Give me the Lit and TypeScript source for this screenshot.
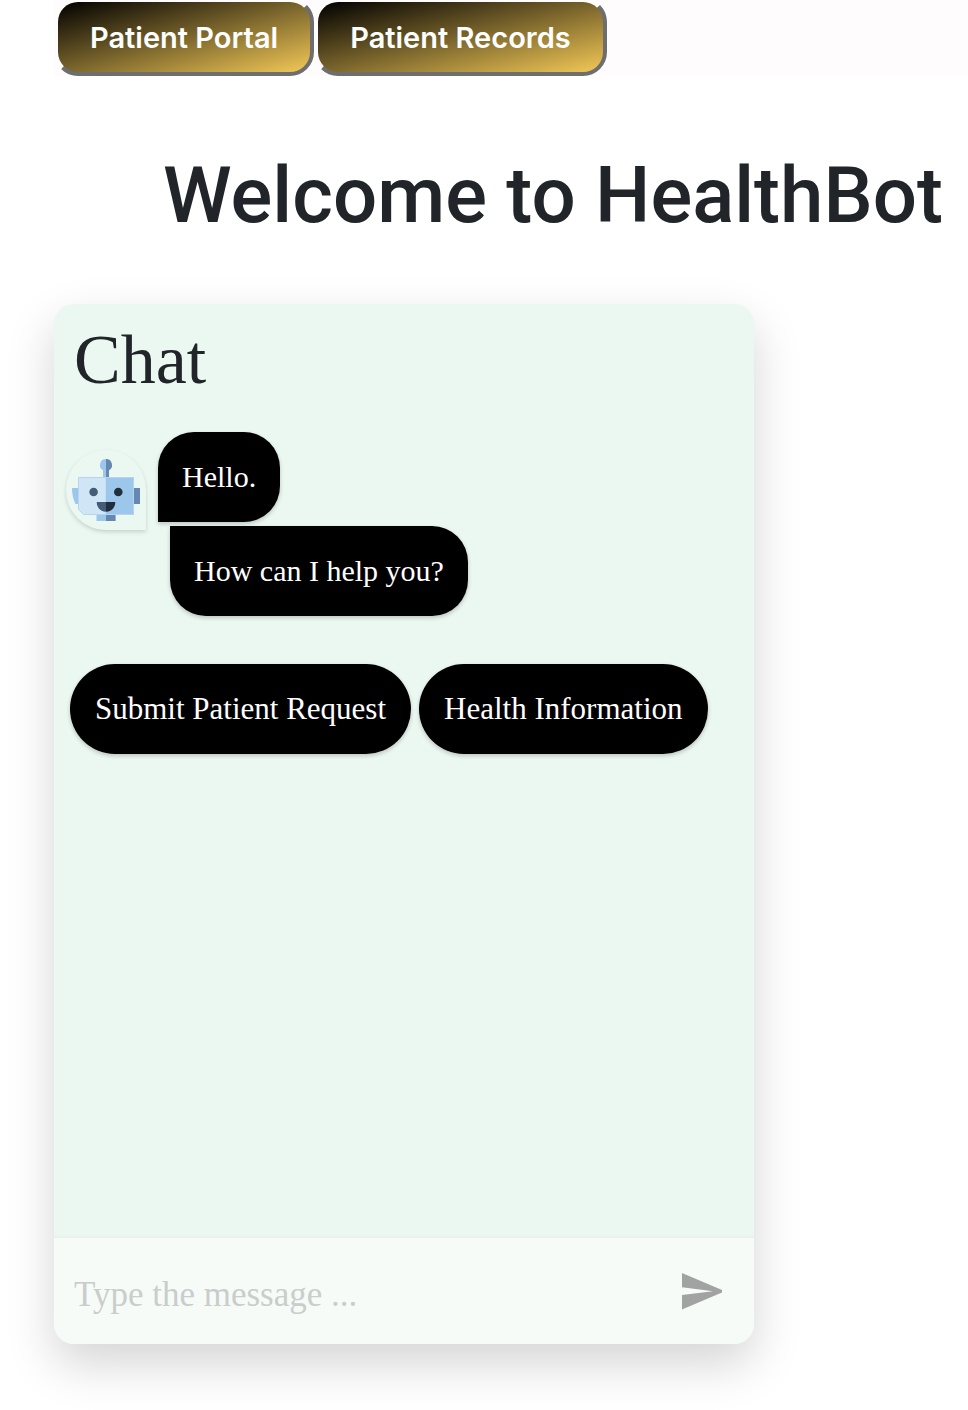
import { LitElement, html, css } from "lit";
import { customElement, property, state } from "lit/decorators.js";

@customElement("bot-avatar")
class BotAvatar extends LitElement {
  static styles = css`
    :host {
      display: block;
      flex: none;
      width: 80px;
      height: 80px;
      border-radius: 40px 40px 0 40px;
      box-shadow: 0 2px 4px rgba(0, 0, 0, 0.15);
    }
    .face {
      display: block;
      width: 100%;
      height: 100%;
    }
  `;

  render() {
    return html`
      <svg class="face" viewBox="0 0 80 80" role="img" aria-label="HealthBot">
        <path fill="#9dc6eb" d="M6 38h7v16H9.500Q6 47 6 38z" />
        <path fill="#6488b0" d="M67 38h7v16h-7z" />
        <path fill="#9dc6eb" d="M30.500 64H40v7h-9.500z" />
        <path fill="#6488b0" d="M40 64h9.600v7H40z" />
        <path fill="#9dc6eb" d="M40 9a6 6 0 0 0-3 11.200V28h3z" />
        <path fill="#6488b0" d="M40 9a6 6 0 0 1 3 11.200V28h-3z" />
        <path fill="#d0e6f7" stroke="#b4d5f2" d="M12.500 27.500H40v37H17.500l-5-5z" />
        <path fill="#9dc6eb" d="M40 27h28v38H40z" />
        <path fill="none" stroke="#b4d5f2" d="M40 27.500h27.500v37H40" />
        <circle cx="27.600" cy="42" r="4.300" fill="#445c78" />
        <circle cx="52.300" cy="42" r="4.300" fill="#212e3c" />
        <path fill="#445c78" d="M30.700 52H40v9.800C34.500 61.800 30.700 57.500 30.700 52z" />
        <path fill="#212e3c" d="M40 52h9.300C49.300 57.500 45.500 61.800 40 61.800z" />
      </svg>
    `;
  }
}

@customElement("chat-panel")
class ChatPanel extends LitElement {
  @property({ type: Array }) options: string[] = [];
  @state() private draft = "";

  static styles = css`
    :host {
      display: flex;
      flex-direction: column;
      box-sizing: border-box;
      max-width: 700px;
      min-height: 1040px;
      border-radius: 20px;
      overflow: hidden;
      background: #ebf7f1;
      box-shadow: 0 20px 48px rgba(0, 0, 0, 0.17);
      font-family: Georgia, "Liberation Serif", serif;
    }
    .title {
      margin: 0;
      padding: 16px 20px 0;
      font-size: 70px;
      font-weight: 400;
      line-height: 80px;
      color: #212529;
    }
    .log {
      flex: 1;
      padding: 32px 12px;
    }
    .turn {
      display: flex;
      align-items: flex-start;
      gap: 12px;
    }
    .turn bot-avatar {
      margin-top: 18px;
    }
    .bubbles {
      display: flex;
      flex-direction: column;
      align-items: flex-start;
      gap: 4px;
    }
    .bubble,
    .option {
      box-sizing: border-box;
      min-height: 90px;
      margin: 0;
      padding: 24px;
      border: 0;
      background: #000;
      color: #fff;
      font-family: inherit;
      font-size: 31px;
      line-height: 42px;
      box-shadow: 0 2px 4px rgba(0, 0, 0, 0.2);
    }
    .bubble {
      border-radius: 36px 36px 36px 0;
      font-size: 30px;
    }
    .bubble + .bubble {
      margin-left: 12px;
      border-radius: 0 36px 36px 36px;
    }
    .options {
      display: flex;
      flex-wrap: wrap;
      gap: 8px;
      padding: 48px 4px 0;
    }
    .option {
      padding: 24px 25px;
      border-radius: 45px;
      cursor: pointer;
    }
    .composer {
      display: flex;
      align-items: center;
      gap: 16px;
      padding: 13px 32px 13px 20px;
      border-top: 2px solid #eaf2ee;
      background: #f6fbf8;
    }
    .entry {
      flex: 1;
      min-width: 0;
      height: 80px;
      box-sizing: border-box;
      padding: 8px 0 0;
      border: 0;
      outline: 0;
      background: none;
      color: #212529;
      font-family: inherit;
      font-size: 35px;
    }
    .entry::placeholder {
      color: #c9cdcb;
      opacity: 1;
    }
    .send {
      display: block;
      padding: 0;
      border: 0;
      background: none;
      cursor: pointer;
    }
    .arrow {
      display: block;
      width: 40px;
      height: 38px;
    }
  `;

  render() {
    return html`
      <h2 class="title">Chat</h2>
      <div class="log">
        <div class="turn">
          <bot-avatar></bot-avatar>
          <div class="bubbles">
            <p class="bubble">Hello.</p>
            <p class="bubble">How can I help you?</p>
          </div>
        </div>
        <div class="options">
          ${this.options.map(
            (label) => html`<button class="option" type="button">${label}</button>`
          )}
        </div>
      </div>
      <form class="composer" @submit=${(e: Event) => e.preventDefault()}>
        <input
          class="entry"
          type="text"
          aria-label="Message"
          placeholder="Type the message ..."
          .value=${this.draft}
          @input=${(e: Event) => (this.draft = (e.target as HTMLInputElement).value)}
        />
        <button class="send" type="submit" aria-label="Send">
          <svg class="arrow" viewBox="0 0 40 38" aria-hidden="true">
            <path fill="#a0a3a1" d="M0 1l40 17v2.500L0 37.500V23l31-3.800L0 15.200z" />
          </svg>
        </button>
      </form>
    `;
  }
}

@customElement("app-root")
class AppRoot extends LitElement {
  static styles = css`
    :host {
      display: block;
      padding-left: 54px;
      overflow: hidden;
      background: #fff;
      font-family: Inter, sans-serif;
      color: #212529;
    }
    .nav {
      display: flex;
      margin-top: -2px;
      background: #fffcfd;
    }
    .link {
      padding: 16px 32px 14px;
      border: 4px solid;
      border-color: #fffcfd #6e6e6e #6e6e6e #fffcfd;
      border-radius: 24px;
      background: linear-gradient(to bottom right, #000, #f2c857);
      color: #fff;
      font-family: inherit;
      font-size: 29px;
      font-weight: 600;
      line-height: 40px;
      cursor: pointer;
    }
    .heading {
      margin: 0;
      padding: 70px 0 58px 84px;
      font-family: Roboto, sans-serif;
      font-size: 78px;
      font-weight: 500;
      line-height: 100px;
      text-align: center;
      white-space: nowrap;
    }
    .stage {
      padding: 0 60px 66px 0;
    }
  `;

  render() {
    return html`
      <nav class="nav">
        <button class="link" type="button">Patient Portal</button>
        <button class="link" type="button">Patient Records</button>
      </nav>
      <h1 class="heading">Welcome to HealthBot</h1>
      <main class="stage">
        <chat-panel
          .options=${["Submit Patient Request", "Health Information"]}
        ></chat-panel>
      </main>
    `;
  }
}
